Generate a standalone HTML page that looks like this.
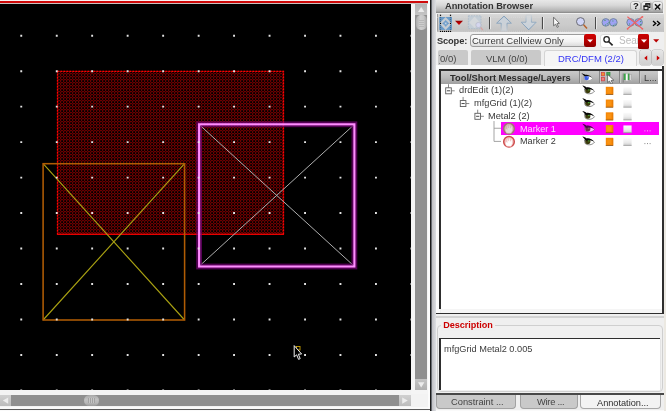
<!DOCTYPE html>
<html>
<head>
<meta charset="utf-8">
<title>Annotation Browser</title>
<style>
html,body{margin:0;padding:0;}
body{width:666px;height:411px;overflow:hidden;background:#efefef;position:relative;
 font-family:"Liberation Sans",sans-serif;font-size:9.3px;color:#2a2a2a;}
.a{position:absolute;}
.t{position:absolute;white-space:nowrap;line-height:12px;will-change:transform;}
.b{font-weight:bold;}
#panel{left:436px;top:0;width:228px;height:411px;background:#efefef;}
.row{position:absolute;left:0;height:12.75px;width:217px;}
.tb{top:1.8px;width:8.8px;height:8.6px;border-radius:2px;background:linear-gradient(#f2f2f2,#d2d2d2);box-shadow:0 0 0 0.6px #9a9a9a}
.sb{top:50.2px;width:11.2px;height:15px;border-radius:2.5px;background:linear-gradient(#e6e6e6,#cfcfcf);box-shadow:0 0 0 0.6px #b4b4b4}
.hs{top:71.4px;width:1px;height:12px;background:#868686;box-shadow:1px 0 0 #c8c8c8}
</style>
</head>
<body>
<!-- ===== layout canvas ===== -->
<div class="a" style="left:0;top:0;width:430px;height:1px;background:#fbf3f3"></div>
<div class="a" style="left:0;top:1px;width:428px;height:2px;background:#cf0a0a"></div>
<div class="a" style="left:0;top:3px;width:428px;height:1px;background:#c9c2c2"></div>
<svg class="a" style="left:0;top:4px" width="411" height="386" viewBox="0 4 411 386">
 <defs>
  <pattern id="stip" x="57" y="70" width="3" height="3" patternUnits="userSpaceOnUse">
   <rect width="3" height="3" fill="#000"/>
   <rect x="0" y="0" width="1" height="1" fill="#2a0000"/>
   <rect x="1" y="0" width="2" height="1" fill="#6a0000"/>
   <rect x="0" y="1" width="1" height="2" fill="#6a0000"/>
   <rect x="1" y="1" width="1" height="1" fill="#2c0000"/>
   <rect x="2" y="1" width="1" height="1" fill="#160000"/>
   <rect x="1" y="2" width="1" height="1" fill="#160000"/>
  </pattern>
  
 </defs>
 <rect x="0" y="4" width="411" height="386" fill="#000"/>
 <!-- Metal2 shape -->
 <rect x="57" y="71" width="226.5" height="163.5" fill="url(#stip)"/>
 <rect x="57.5" y="71.4" width="226" height="163" fill="none" stroke="#8a0000" stroke-width="1.2"/>
 <rect x="57.5" y="71.4" width="226" height="163" fill="none" stroke="#ff0000" stroke-width="1.2" stroke-dasharray="1.5 1.5"/>
 <path d="M57 234.3 H284" stroke="#e80000" stroke-width="1.2"/>
 <!-- marker 2 (orange) -->
 <path d="M43.1 163.7 L184.6 320 M184.6 163.7 L43.1 320" stroke="#a8a012" stroke-width="1.15" fill="none"/>
 <rect x="43.1" y="163.7" width="141.5" height="156.3" fill="none" stroke="#b05c04" stroke-width="1.55"/>
 <!-- marker 1 (magenta highlight) -->
 <path d="M199 124.4 L354.4 266.4 M354.4 124.4 L199 266.4" stroke="#adadad" stroke-width="1" fill="none"/>
 <rect x="199.1" y="124.3" width="155.3" height="142.2" fill="none" stroke="#7a007a" stroke-width="5.8" opacity="0.68"/>
 <rect x="199.1" y="124.3" width="155.3" height="142.2" fill="none" stroke="#ff8cff" stroke-width="2.1"/>
 <!-- grid -->
 <path fill="#e2e2e2" d="M20.3 34.8h1.9v1.9h-1.9zM55.8 34.8h1.9v1.9h-1.9zM91.2 34.8h1.9v1.9h-1.9zM126.7 34.8h1.9v1.9h-1.9zM162.2 34.8h1.9v1.9h-1.9zM197.7 34.8h1.9v1.9h-1.9zM233.1 34.8h1.9v1.9h-1.9zM268.6 34.8h1.9v1.9h-1.9zM304.1 34.8h1.9v1.9h-1.9zM339.5 34.8h1.9v1.9h-1.9zM375.0 34.8h1.9v1.9h-1.9zM410.5 34.8h1.9v1.9h-1.9zM20.3 70.3h1.9v1.9h-1.9zM55.8 70.3h1.9v1.9h-1.9zM91.2 70.3h1.9v1.9h-1.9zM126.7 70.3h1.9v1.9h-1.9zM162.2 70.3h1.9v1.9h-1.9zM197.7 70.3h1.9v1.9h-1.9zM233.1 70.3h1.9v1.9h-1.9zM268.6 70.3h1.9v1.9h-1.9zM304.1 70.3h1.9v1.9h-1.9zM339.5 70.3h1.9v1.9h-1.9zM375.0 70.3h1.9v1.9h-1.9zM410.5 70.3h1.9v1.9h-1.9zM20.3 105.7h1.9v1.9h-1.9zM55.8 105.7h1.9v1.9h-1.9zM91.2 105.7h1.9v1.9h-1.9zM126.7 105.7h1.9v1.9h-1.9zM162.2 105.7h1.9v1.9h-1.9zM197.7 105.7h1.9v1.9h-1.9zM233.1 105.7h1.9v1.9h-1.9zM268.6 105.7h1.9v1.9h-1.9zM304.1 105.7h1.9v1.9h-1.9zM339.5 105.7h1.9v1.9h-1.9zM375.0 105.7h1.9v1.9h-1.9zM410.5 105.7h1.9v1.9h-1.9zM20.3 141.2h1.9v1.9h-1.9zM55.8 141.2h1.9v1.9h-1.9zM91.2 141.2h1.9v1.9h-1.9zM126.7 141.2h1.9v1.9h-1.9zM162.2 141.2h1.9v1.9h-1.9zM197.7 141.2h1.9v1.9h-1.9zM233.1 141.2h1.9v1.9h-1.9zM268.6 141.2h1.9v1.9h-1.9zM304.1 141.2h1.9v1.9h-1.9zM339.5 141.2h1.9v1.9h-1.9zM375.0 141.2h1.9v1.9h-1.9zM410.5 141.2h1.9v1.9h-1.9zM20.3 176.7h1.9v1.9h-1.9zM55.8 176.7h1.9v1.9h-1.9zM91.2 176.7h1.9v1.9h-1.9zM126.7 176.7h1.9v1.9h-1.9zM162.2 176.7h1.9v1.9h-1.9zM197.7 176.7h1.9v1.9h-1.9zM233.1 176.7h1.9v1.9h-1.9zM268.6 176.7h1.9v1.9h-1.9zM304.1 176.7h1.9v1.9h-1.9zM339.5 176.7h1.9v1.9h-1.9zM375.0 176.7h1.9v1.9h-1.9zM410.5 176.7h1.9v1.9h-1.9zM20.3 212.1h1.9v1.9h-1.9zM55.8 212.1h1.9v1.9h-1.9zM91.2 212.1h1.9v1.9h-1.9zM126.7 212.1h1.9v1.9h-1.9zM162.2 212.1h1.9v1.9h-1.9zM197.7 212.1h1.9v1.9h-1.9zM233.1 212.1h1.9v1.9h-1.9zM268.6 212.1h1.9v1.9h-1.9zM304.1 212.1h1.9v1.9h-1.9zM339.5 212.1h1.9v1.9h-1.9zM375.0 212.1h1.9v1.9h-1.9zM410.5 212.1h1.9v1.9h-1.9zM20.3 247.6h1.9v1.9h-1.9zM55.8 247.6h1.9v1.9h-1.9zM91.2 247.6h1.9v1.9h-1.9zM126.7 247.6h1.9v1.9h-1.9zM162.2 247.6h1.9v1.9h-1.9zM197.7 247.6h1.9v1.9h-1.9zM233.1 247.6h1.9v1.9h-1.9zM268.6 247.6h1.9v1.9h-1.9zM304.1 247.6h1.9v1.9h-1.9zM339.5 247.6h1.9v1.9h-1.9zM375.0 247.6h1.9v1.9h-1.9zM410.5 247.6h1.9v1.9h-1.9zM20.3 283.1h1.9v1.9h-1.9zM55.8 283.1h1.9v1.9h-1.9zM91.2 283.1h1.9v1.9h-1.9zM126.7 283.1h1.9v1.9h-1.9zM162.2 283.1h1.9v1.9h-1.9zM197.7 283.1h1.9v1.9h-1.9zM233.1 283.1h1.9v1.9h-1.9zM268.6 283.1h1.9v1.9h-1.9zM304.1 283.1h1.9v1.9h-1.9zM339.5 283.1h1.9v1.9h-1.9zM375.0 283.1h1.9v1.9h-1.9zM410.5 283.1h1.9v1.9h-1.9zM20.3 318.6h1.9v1.9h-1.9zM55.8 318.6h1.9v1.9h-1.9zM91.2 318.6h1.9v1.9h-1.9zM126.7 318.6h1.9v1.9h-1.9zM162.2 318.6h1.9v1.9h-1.9zM197.7 318.6h1.9v1.9h-1.9zM233.1 318.6h1.9v1.9h-1.9zM268.6 318.6h1.9v1.9h-1.9zM304.1 318.6h1.9v1.9h-1.9zM339.5 318.6h1.9v1.9h-1.9zM375.0 318.6h1.9v1.9h-1.9zM410.5 318.6h1.9v1.9h-1.9zM20.3 354.0h1.9v1.9h-1.9zM55.8 354.0h1.9v1.9h-1.9zM91.2 354.0h1.9v1.9h-1.9zM126.7 354.0h1.9v1.9h-1.9zM162.2 354.0h1.9v1.9h-1.9zM197.7 354.0h1.9v1.9h-1.9zM233.1 354.0h1.9v1.9h-1.9zM268.6 354.0h1.9v1.9h-1.9zM304.1 354.0h1.9v1.9h-1.9zM339.5 354.0h1.9v1.9h-1.9zM375.0 354.0h1.9v1.9h-1.9zM410.5 354.0h1.9v1.9h-1.9zM20.3 389.5h1.9v1.9h-1.9zM55.8 389.5h1.9v1.9h-1.9zM91.2 389.5h1.9v1.9h-1.9zM126.7 389.5h1.9v1.9h-1.9zM162.2 389.5h1.9v1.9h-1.9zM197.7 389.5h1.9v1.9h-1.9zM233.1 389.5h1.9v1.9h-1.9zM268.6 389.5h1.9v1.9h-1.9zM304.1 389.5h1.9v1.9h-1.9zM339.5 389.5h1.9v1.9h-1.9zM375.0 389.5h1.9v1.9h-1.9zM410.5 389.5h1.9v1.9h-1.9z"/>
 <!-- cursor -->
 <rect x="296.5" y="346.5" width="3.5" height="3.5" fill="none" stroke="#c8a000" stroke-width="0.9"/>
 <path d="M294.2 345.6 L294.2 357 L296.6 354.8 L298.6 359.4 L300.2 358.6 L298.3 354.2 L301.6 354 Z" fill="#000" stroke="#f0f0f0" stroke-width="1"/>
</svg>
<!-- scrollbars -->
<div class="a" style="left:0;top:390px;width:430px;height:17px;background:#f3f3f3"></div>
<div class="a" style="left:411px;top:4px;width:19px;height:390px;background:#f5f5f5"></div>
<div class="a" style="left:415px;top:4px;width:12.4px;height:386px;background:#909090"></div>
<div class="a" style="left:415px;top:4px;width:12.4px;height:11px;background:linear-gradient(#b4b4b4,#c4c4c4)"></div>
<svg class="a" style="left:415px;top:4px" width="13" height="11"><path d="M6.2 3 L9.4 8 L3 8 Z" fill="#ececec"/></svg>
<div class="a" style="left:415.6px;top:15.3px;width:11.2px;height:15px;border-radius:5px;background:linear-gradient(90deg,#aaa,#cfcfcf 40%,#c8c8c8 70%,#a4a4a4);"></div>
<div class="a" style="left:418.5px;top:19.5px;width:5.5px;height:7px;background:repeating-linear-gradient(#b8b8b8 0,#b8b8b8 1px,#cdcdcd 1px,#cdcdcd 2px)"></div>
<div class="a" style="left:415px;top:379.3px;width:12.4px;height:10.7px;background:linear-gradient(#c4c4c4,#b0b0b0)"></div>
<svg class="a" style="left:415px;top:379px" width="13" height="11"><path d="M3 3.2 L9.4 3.2 L6.2 8.4 Z" fill="#ececec"/></svg>

<div class="a" style="left:0;top:394.8px;width:411px;height:11.5px;background:#8f8f8f"></div>
<div class="a" style="left:0;top:394.8px;width:11px;height:11.5px;background:linear-gradient(#d0d0d0,#bcbcbc)"></div>
<svg class="a" style="left:0;top:395px" width="11" height="11"><path d="M2.8 5.6 L8.2 2.4 L8.2 8.8 Z" fill="#ececec"/></svg>
<div class="a" style="left:399px;top:394.8px;width:11.6px;height:11.5px;background:linear-gradient(#d0d0d0,#bcbcbc)"></div>
<svg class="a" style="left:399px;top:395px" width="12" height="11"><path d="M8.8 5.6 L3.2 2.4 L3.2 8.8 Z" fill="#ececec"/></svg>
<div class="a" style="left:83.6px;top:395px;width:15.6px;height:11px;border-radius:5.5px;background:linear-gradient(#a8a8a8,#c0c0c0 40%,#b8b8b8 70%,#9c9c9c);"></div>
<div class="a" style="left:87.6px;top:398px;width:7.6px;height:5px;background:repeating-linear-gradient(90deg,#a2a2a2 0,#a2a2a2 1px,#c6c6c6 1px,#c6c6c6 2px)"></div>
<div class="a" style="left:0;top:407px;width:430px;height:2px;background:#fafafa"></div>
<div class="a" style="left:0;top:408.8px;width:430px;height:1px;background:#5a5a5a"></div>
<div class="a" style="left:0;top:410px;width:430px;height:1px;background:#fafafa"></div>
<div class="a" style="left:427.6px;top:0;width:2.6px;height:409px;background:#fcfcfc"></div>
<!-- splitter -->
<div class="a" style="left:430px;top:0;width:1px;height:411px;background:#1c1c1c"></div>
<div class="a" style="left:431px;top:0;width:1px;height:411px;background:#686c72"></div>
<div class="a" style="left:432px;top:0;width:4px;height:411px;background:linear-gradient(90deg,#c0c0c4,#cfd0d4 50%,#dddfe3)"></div>

<!-- ===== Annotation Browser panel ===== -->
<div id="panel" class="a">
 <!-- title bar -->
 <div class="a" style="left:0;top:0;width:227.3px;height:13.4px;background:linear-gradient(#e8e8e8,#d8d8d8 40%,#b6b6b6 80%,#a0a0a0 92%,#808080)"></div>
 <div class="t b" style="left:9.2px;top:0.3px;font-size:9.25px;color:#333;letter-spacing:-0.02px">Annotation Browser</div>
 <div class="a tb" style="left:195px"></div><div class="a tb" style="left:206.2px"></div><div class="a tb" style="left:217.3px"></div>
 <div class="t b" style="left:197px;top:0.2px;font-size:9.5px;color:#111">?</div>
 <svg class="a" style="left:206px;top:1.5px" width="10" height="10"><path d="M3.8 3.4 V1.7 H7.9 V5.4 H6.4" fill="none" stroke="#111" stroke-width="1.05"/><path d="M3.4 2 H8.2" stroke="#111" stroke-width="1.3"/><rect x="2" y="4" width="4" height="3.7" fill="#e4e4e4" stroke="#111" stroke-width="1.05"/><path d="M1.6 4.3 H6.4" stroke="#111" stroke-width="1.3"/></svg>
 <svg class="a" style="left:217.3px;top:1.5px" width="10" height="10"><path d="M2 2.2 L7.2 7.6 M7.2 2.2 L2 7.6" stroke="#111" stroke-width="1.5"/></svg>
 <!-- toolbar -->
 <div class="a" style="left:0;top:13.8px;width:1px;height:18.6px;background:#f6f6f6"></div>
 <div class="a" style="left:1px;top:13.8px;width:227px;height:18.6px;background:linear-gradient(#dadada,#cfcfcf 25%,#cbcbcb 60%,#c1c1c1);box-shadow:inset 1px 0 0 #9c9c9c"></div>
 <svg class="a" style="left:0;top:13px" width="228" height="20" viewBox="436 13 228 20">
  <defs>
  <linearGradient id="ups" gradientUnits="userSpaceOnUse" x1="0" y1="16" x2="0" y2="31"><stop offset="0" stop-color="#7496b6"/><stop offset="0.5" stop-color="#86a2bc"/><stop offset="1" stop-color="#c6ccd2"/></linearGradient>
  <linearGradient id="upf" gradientUnits="userSpaceOnUse" x1="0" y1="16" x2="0" y2="31"><stop offset="0" stop-color="#c8d2dc"/><stop offset="1" stop-color="#cfd1d4"/></linearGradient>
  <linearGradient id="dns" gradientUnits="userSpaceOnUse" x1="0" y1="15" x2="0" y2="30"><stop offset="0" stop-color="#cfd3d7"/><stop offset="0.5" stop-color="#8ca6be"/><stop offset="1" stop-color="#7496b6"/></linearGradient>
  <linearGradient id="dnf" gradientUnits="userSpaceOnUse" x1="0" y1="15" x2="0" y2="30"><stop offset="0" stop-color="#d6d8da"/><stop offset="1" stop-color="#c6d0da"/></linearGradient>
  <linearGradient id="rtri" x1="0" y1="0" x2="0" y2="1"><stop offset="0" stop-color="#8e0000"/><stop offset="1" stop-color="#e40000"/></linearGradient></defs>
  <path d="M437 17.4 H663 M437 31.3 H663" stroke="#dedede" stroke-width="0.9" stroke-dasharray="1 1.05" opacity="0.6"/>
  <!-- fit icon -->
  <rect x="439.2" y="17" width="12.8" height="12.9" fill="#6a9bc9"/>
  <path d="M445.6 17 L452 23.4 L445.6 29.9 L439.2 23.4 Z" fill="#c6ccd3"/>
  <circle cx="445.7" cy="23.4" r="2.1" fill="#86aed4" stroke="#6f9dca" stroke-width="0.7"/>
  <path d="M445.7 20.2 V26.6 M442.5 23.4 H448.9" stroke="#6f9dca" stroke-width="1.2"/>
  <circle cx="445.7" cy="23.4" r="0.9" fill="#c4d4e4"/>
  <g fill="#000">
   <rect x="439.9" y="14.7" width="1.2" height="1.2"/><rect x="449.9" y="14.7" width="1.2" height="1.2"/>
   <rect x="439.9" y="22.8" width="1.2" height="1.2"/><rect x="449.9" y="22.8" width="1.2" height="1.2"/>
   <rect x="439.9" y="30.8" width="1.2" height="1.2"/><rect x="441.9" y="30.8" width="1.2" height="1.2"/><rect x="443.9" y="30.8" width="1.2" height="1.2"/><rect x="445.9" y="30.8" width="1.2" height="1.2"/><rect x="447.9" y="30.8" width="1.2" height="1.2"/><rect x="449.9" y="30.8" width="1.2" height="1.2"/>
  </g>
  <g fill="#20303c" opacity="0.45">
   <rect x="439.9" y="16.8" width="1.2" height="1.2"/><rect x="439.9" y="18.8" width="1.2" height="1.2"/><rect x="439.9" y="20.8" width="1.2" height="1.2"/><rect x="439.9" y="24.8" width="1.2" height="1.2"/><rect x="439.9" y="26.8" width="1.2" height="1.2"/><rect x="439.9" y="28.8" width="1.2" height="1.2"/>
   <rect x="449.9" y="16.8" width="1.2" height="1.2"/><rect x="449.9" y="18.8" width="1.2" height="1.2"/><rect x="449.9" y="20.8" width="1.2" height="1.2"/><rect x="449.9" y="24.8" width="1.2" height="1.2"/><rect x="449.9" y="26.8" width="1.2" height="1.2"/><rect x="449.9" y="28.8" width="1.2" height="1.2"/>
  </g>
  <path d="M455 20.8 H463 L459 25.1 Z" fill="url(#rtri)"/>
  <!-- zoom-to icon (disabled) -->
  <rect x="468.4" y="15.8" width="12.6" height="12.8" fill="#c3cdd6" stroke="#a9b9c8" stroke-width="0.8" stroke-dasharray="1.6 1"/>
  <path d="M474.6 16.6 L480 22.4 L474.6 28 L469.2 22.4 Z" fill="#d4d8dc"/>
  <circle cx="478.4" cy="25" r="2.6" fill="#d4d6ee" stroke="#b4b8c8" stroke-width="0.7"/>
  <path d="M480.6 27.4 L482.8 30.2" stroke="#d8a0a0" stroke-width="1.2"/>
  <rect x="489" y="17" width="1.1" height="12.2" fill="#4a4a4a"/><rect x="490.1" y="17" width="0.9" height="12.2" fill="#ececec"/>
  <!-- up / down arrows (disabled) -->
  <path d="M504 16.2 L511.4 23.2 H507 V31 H501.2 V23.2 H496.6 Z" fill="url(#upf)" stroke="url(#ups)" stroke-width="0.9"/>
  <path d="M526 15 H531.4 V22.2 H536.2 L528.7 29.8 L521.2 22.2 H526 Z" fill="url(#dnf)" stroke="url(#dns)" stroke-width="0.9"/>
  <rect x="541.9" y="17" width="1.1" height="12.2" fill="#4a4a4a"/><rect x="543.0" y="17" width="0.9" height="12.2" fill="#ececec"/>
  <!-- pointer -->
  <path d="M553.6 17.2 V25.8 L555.6 24.2 L557.2 27.4 L558.4 26.8 L556.9 23.7 L559.4 23.4 Z" fill="#fafafa" stroke="#555" stroke-width="0.8"/>
  <!-- magnifier -->
  <circle cx="580.5" cy="21.6" r="4" fill="#cfd4f6" stroke="#6a6a72" stroke-width="1"/>
  <path d="M583.6 24.8 L587 28.4" stroke="#b8602a" stroke-width="1.5"/>
  <rect x="595" y="17" width="1.1" height="12.2" fill="#4a4a4a"/><rect x="596.1" y="17" width="0.9" height="12.2" fill="#ececec"/>
  <!-- binoculars -->
  <circle cx="605.8" cy="22.4" r="3.8" fill="#9ea2f4" stroke="#6d8496" stroke-width="0.9"/>
  <circle cx="613.4" cy="22.4" r="3.8" fill="#9ea2f4" stroke="#6d8496" stroke-width="0.9"/>
  <path d="M604.4 20.4 h1.2 M606.8 23.8 h1 M612.4 21 h1 M614.6 24.2 h1 M609 22 v1.2 M605 25 h1 M613 25.4 h1" stroke="#3c9a54" stroke-width="0.9"/>
  <!-- binoculars crossed -->
  <circle cx="630.6" cy="22.4" r="3.8" fill="#9ea2f4" stroke="#6d8496" stroke-width="0.9"/>
  <circle cx="638.6" cy="22.4" r="3.8" fill="#9ea2f4" stroke="#6d8496" stroke-width="0.9"/>
  <path d="M629 24 h1 M640.6 21 v1.2 M640.6 24 v1" stroke="#3c9a54" stroke-width="0.9"/>
  <path d="M627.4 16.8 L642.4 28.8 M642.4 16.8 L627.4 28.8" stroke="#ee6262" stroke-width="1.1"/>
  <circle cx="627.6" cy="28.8" r="0.9" fill="#ee6262"/><circle cx="642.4" cy="16.8" r="0.9" fill="#ee6262"/><circle cx="642.4" cy="28.8" r="0.9" fill="#ee6262"/>
  <path d="M653 21 L655.8 23.4 L653 25.8 M657 21 L659.8 23.4 L657 25.8" fill="none" stroke="#000" stroke-width="1.3"/>
 </svg>
 <!-- scope row -->
 <div class="t b" style="left:1.1px;top:35.2px;font-size:9.3px;color:#333;letter-spacing:-0.15px">Scope:</div>
 <div class="a" style="left:33.8px;top:34px;width:126.6px;height:13.4px;box-sizing:border-box;border:1px solid #9c9c9c;border-radius:3px;background:linear-gradient(#fdfdfd,#f2f2f2 60%,#dcdcdc)"></div>
 <div class="t" style="left:35.6px;top:35.2px;font-size:9.5px;color:#3a3a3a">Current Cellview Only</div>
 <div class="a" style="left:148px;top:34.3px;width:12.2px;height:12.9px;border-radius:2.5px;background:linear-gradient(#d40000,#b80000 50%,#8e0000)"></div>
 <svg class="a" style="left:148px;top:34px" width="13" height="14"><path d="M3.2 5.4 H9 L6.1 8.6 Z" fill="#fff"/></svg>
 <div class="a" style="left:163.7px;top:33.8px;width:49.4px;height:14.6px;box-sizing:border-box;border:1px solid #dcdcdc;border-radius:3px;background:#fff"></div>
 <svg class="a" style="left:165px;top:34px" width="14" height="14"><circle cx="5.6" cy="5.4" r="2.7" fill="none" stroke="#222" stroke-width="1.3"/><path d="M7.6 7.5 L11.6 11.4" stroke="#222" stroke-width="1.7"/></svg>
 <div class="t" style="left:182.6px;top:35.4px;font-size:10px;color:#bcbcbc;width:20px;overflow:hidden">Search</div>
 <div class="a" style="left:201.6px;top:34.2px;width:11.5px;height:14.5px;border-radius:1.5px;background:linear-gradient(#cc0000,#b40000 50%,#930000)"></div>
 <svg class="a" style="left:201.6px;top:34px" width="12" height="14"><path d="M3 5.6 H9 L6 8.8 Z" fill="#fff"/></svg>
 <svg class="a" style="left:216px;top:38px" width="10" height="6"><path d="M1.2 1.2 H7.2 L4.2 4.6 Z" fill="#b80000"/></svg>
 <!-- tabs -->
 <div class="a" style="left:0;top:65px;width:228px;height:4.6px;background:#f9f9f9"></div>
 <div class="a" style="left:2.4px;top:50px;width:29.4px;height:15px;background:#c9c9c9;border-radius:2px 2px 0 0"></div>
 <div class="t" style="left:3px;top:52.8px;font-size:9.5px;color:#444;width:28px;overflow:hidden"><span style="margin-left:-2.2px">(0/0)</span></div>
 <div class="a" style="left:35px;top:50px;width:69.6px;height:15px;background:#c9c9c9;border-radius:2px 2px 0 0"></div>
 <div class="t" style="left:50px;top:52.8px;font-size:9.5px;color:#444">VLM (0/0)</div>
 <div class="a" style="left:108.4px;top:49.6px;width:92.4px;height:16.6px;box-sizing:border-box;background:#f5f5f5;border:1px solid #d4d4d4;border-bottom:none;border-radius:3px 3px 0 0"></div>
 <div class="t" style="left:122px;top:52.8px;font-size:9.5px;color:#3434f4">DRC/DFM (2/2)</div>
 <div class="a sb" style="left:204px"></div><div class="a sb" style="left:215.8px"></div>
 <svg class="a" style="left:204px;top:50px" width="24" height="16"><path d="M7.2 5.6 V10.6 L4.2 8.1 Z M16.8 5.6 V10.6 L19.8 8.1 Z" fill="#c80000"/></svg>
 <!-- tree frame -->
 <div class="a" style="left:0;top:66px;width:4px;height:246.6px;background:#fbfbfb"></div>
 <div class="a" style="left:5px;top:70.8px;width:221.2px;height:238.4px;background:#fff"></div>
 <div class="a" style="left:5px;top:309.2px;width:222px;height:3.4px;background:#f5f5f5"></div>
 <div class="a" style="left:3.4px;top:69.3px;width:224.2px;height:1.5px;background:#2e2e2e"></div>
 <div class="a" style="left:3.4px;top:69.3px;width:1.6px;height:239.4px;background:#2e2e2e"></div>
 <div class="a" style="left:226.2px;top:66px;width:1.5px;height:248px;background:#2e2e2e"></div>
 <div class="a" style="left:0;top:312.6px;width:227.7px;height:1.5px;background:#2e2e2e"></div>
 <div class="a" style="left:0;top:316.2px;width:228px;height:2px;background:#d2d2d2"></div>
 <!-- header -->
 <div class="a" style="left:5px;top:70.8px;width:217.2px;height:13.1px;background:linear-gradient(#c9c9c9,#b9b9b9 50%,#9f9f9f)"></div>
 <div class="a hs" style="left:143px"></div><div class="a hs" style="left:163px"></div><div class="a hs" style="left:183.2px"></div><div class="a hs" style="left:203px"></div>
 <div class="t b" style="left:14px;top:71.9px;font-size:9.35px;color:#2c2c2c">Tool/Short Message/Layers</div>
 <div class="t" style="left:208.4px;top:71.9px;font-size:9.3px;color:#3a3a3a">L...</div>
<svg class="a" style="left:140px;top:70px" width="88" height="14" viewBox="576 70 88 14">
<g transform="translate(581.2,72.8)">
   <path d="M2.6 3.2 C5 1.6 9 2.6 11.4 5.6 C9.6 8.2 5.4 8.6 3 6.6 Z" fill="#fff" stroke="#8a8a8a" stroke-width="0.6"/>
   <ellipse cx="5.4" cy="4.9" rx="2.3" ry="2.5" fill="#3c5ce4"/>
   <circle cx="6.3" cy="4.1" r="0.7" fill="#8aa0ff"/>
   <path d="M0.2 0.4 C1.6 0.6 3 1.4 4 2 C6 1.6 8.6 2.4 10.6 4.6 C8.2 3.4 5.6 3 3.4 3.6 C2.4 2.4 1.2 1.2 0.2 0.4 Z" fill="#0a0a0a"/>
  </g><rect x="601.4" y="72.6" width="3.2" height="3.2" fill="#f09030" stroke="#d04040" stroke-width="0.7"/>
<rect x="606.8" y="72.4" width="3.2" height="3.2" fill="#48b058" stroke="#2c8c3c" stroke-width="0.7"/>
<rect x="601.4" y="77.6" width="3.2" height="3.2" fill="#f08080" stroke="#d04040" stroke-width="0.7"/>
<path d="M607.6 74.4 V82.6 L609.5 81 L611 84 L612.5 83.3 L611.1 80.5 L613.8 80.2 Z" fill="#fff" stroke="#4a4a4a" stroke-width="0.7"/>
<path d="M623.2 73.4 V82.6" stroke="#7a7a7a" stroke-width="0.9"/>
<rect x="623.8" y="73.6" width="2" height="6.4" fill="#3aa648"/><rect x="625.8" y="74.2" width="2" height="6.4" fill="#fafafa"/><rect x="627.8" y="73.6" width="1.8" height="6.4" fill="#3aa648"/><rect x="629.6" y="74.2" width="2" height="6.4" fill="#d8d8d8" stroke="#8a8a8a" stroke-width="0.4"/>
</svg>
<!--ROWS-START-->
<div class="a" style="left:65px;top:122.20px;width:157.6px;height:13px;background:#ff00ff"></div>
<div class="t" style="left:22.5px;top:84px;font-size:9.25px;color:#383838">drdEdit (1)(2)</div>
<div class="t" style="left:37.8px;top:97px;font-size:9.25px;color:#383838">mfgGrid (1)(2)</div>
<div class="t" style="left:52.4px;top:110px;font-size:9.25px;color:#383838">Metal2 (2)</div>
<div class="t" style="left:83.8px;top:123px;font-size:9.1px;color:#ffdcff">Marker 1</div>
<div class="t" style="left:83.8px;top:135px;font-size:9.1px;color:#383838">Marker 2</div>
<svg width="0" height="0" class="a"><defs><linearGradient id="gsq" x1="0" y1="0" x2="0" y2="1"><stop offset="0" stop-color="#fbfbfb"/><stop offset="0.55" stop-color="#ececec"/><stop offset="1" stop-color="#cccccc"/></linearGradient></defs></svg>
<svg class="a" style="left:0;top:83px" width="228" height="70" viewBox="436 83 228 70">
<path d="M448.5 84.2 V87.8 M451.3 90.8 H454.7" stroke="#7a7a7a" stroke-width="0.9" fill="none"/><rect x="445.7" y="87.8" width="5.6" height="6" fill="#fff" stroke="#5c5c5c" stroke-width="0.9"/><path d="M446.9 90.8 H450.09999999999997" stroke="#333" stroke-width="0.9"/>
<path d="M463.1 96.95 V100.55 M465.90000000000003 103.55 H469.3" stroke="#7a7a7a" stroke-width="0.9" fill="none"/><rect x="460.3" y="100.55" width="5.6" height="6" fill="#fff" stroke="#5c5c5c" stroke-width="0.9"/><path d="M461.5 103.55 H464.7" stroke="#333" stroke-width="0.9"/>
<path d="M477.7 109.7 V113.3 M480.5 116.3 H483.9" stroke="#7a7a7a" stroke-width="0.9" fill="none"/><rect x="474.9" y="113.3" width="5.6" height="6" fill="#fff" stroke="#5c5c5c" stroke-width="0.9"/><path d="M476.09999999999997 116.3 H479.29999999999995" stroke="#333" stroke-width="0.9"/>
<path d="M494 121.05 V141.4 M494 128.25 H501 M494 141.4 H501" stroke="#9a9a9a" stroke-width="0.9" fill="none"/>
<circle cx="509" cy="128.65" r="5.3" fill="#d6b4b4" stroke="#a27474" stroke-width="1.5"/>
  <path d="M506.6 133.25 C505.2 131.05 505 128.85 506 128.25 L507.1 129.45000000000002 L507.2 125.85000000000001 L508.3 125.55000000000001 L508.6 128.05 L509.2 125.05000000000001 L510.3 125.25 L510.4 128.25 L511.4 126.05000000000001 L512.3 126.65 L512.4 130.45000000000002 L511.2 133.35 Z" fill="#e2dcdc" stroke="#c8a8a8" stroke-width="0.4"/>
<circle cx="509" cy="141.7" r="5.3" fill="#f3c6c6" stroke="#cf4c4c" stroke-width="1.5"/>
  <path d="M506.6 146.29999999999998 C505.2 144.1 505 141.89999999999998 506 141.29999999999998 L507.1 142.5 L507.2 138.89999999999998 L508.3 138.6 L508.6 141.1 L509.2 138.1 L510.3 138.29999999999998 L510.4 141.29999999999998 L511.4 139.1 L512.3 139.7 L512.4 143.5 L511.2 146.39999999999998 Z" fill="#ffffff" stroke="#eeb0b0" stroke-width="0.4"/>
<g transform="translate(582.3,85.6)">
   <path d="M2.2 3.4 C5 1.4 9.6 2.6 12.2 5.6 C10 8.6 5.4 9 2.8 6.8 Z" fill="#fff" stroke="#4c4c4c" stroke-width="0.65"/>
   <ellipse cx="5.5" cy="5" rx="2.6" ry="2.7" fill="#3c3c0c"/>
   <circle cx="6.6" cy="4.1" r="0.75" fill="#40c840"/>
   <path d="M0 0 C1.8 0.2 3.2 1 4.4 1.8 C6.6 1.4 9.4 2.4 11.6 5 C8.8 3.6 6 3.2 3.4 4.2 C2.4 2.6 1.2 1.2 0 0 Z" fill="#080808"/>
  </g>
<rect x="605.8" y="86.80" width="7.4" height="7.9" fill="#f68808"/><rect x="607.2" y="88.40" width="4" height="4.4" fill="#f99312"/><path d="M605.8 94.50 H613.2" stroke="#7a4a18" stroke-width="0.7"/><path d="M612.8 87.30 V94.20" stroke="#dc7400" stroke-width="0.7"/>
<rect x="623.4" y="87.20" width="8.2" height="7.4" fill="url(#gsq)"/><path d="M623.4 94.40 H631.6" stroke="#9a9a9a" stroke-width="0.8"/>
<g transform="translate(582.3,98.35)">
   <path d="M2.2 3.4 C5 1.4 9.6 2.6 12.2 5.6 C10 8.6 5.4 9 2.8 6.8 Z" fill="#fff" stroke="#4c4c4c" stroke-width="0.65"/>
   <ellipse cx="5.5" cy="5" rx="2.6" ry="2.7" fill="#3c3c0c"/>
   <circle cx="6.6" cy="4.1" r="0.75" fill="#40c840"/>
   <path d="M0 0 C1.8 0.2 3.2 1 4.4 1.8 C6.6 1.4 9.4 2.4 11.6 5 C8.8 3.6 6 3.2 3.4 4.2 C2.4 2.6 1.2 1.2 0 0 Z" fill="#080808"/>
  </g>
<rect x="605.8" y="99.55" width="7.4" height="7.9" fill="#f68808"/><rect x="607.2" y="101.15" width="4" height="4.4" fill="#f99312"/><path d="M605.8 107.25 H613.2" stroke="#7a4a18" stroke-width="0.7"/><path d="M612.8 100.05 V106.95" stroke="#dc7400" stroke-width="0.7"/>
<rect x="623.4" y="99.95" width="8.2" height="7.4" fill="url(#gsq)"/><path d="M623.4 107.15 H631.6" stroke="#9a9a9a" stroke-width="0.8"/>
<g transform="translate(582.3,111.1)">
   <path d="M2.2 3.4 C5 1.4 9.6 2.6 12.2 5.6 C10 8.6 5.4 9 2.8 6.8 Z" fill="#fff" stroke="#4c4c4c" stroke-width="0.65"/>
   <ellipse cx="5.5" cy="5" rx="2.6" ry="2.7" fill="#3c3c0c"/>
   <circle cx="6.6" cy="4.1" r="0.75" fill="#40c840"/>
   <path d="M0 0 C1.8 0.2 3.2 1 4.4 1.8 C6.6 1.4 9.4 2.4 11.6 5 C8.8 3.6 6 3.2 3.4 4.2 C2.4 2.6 1.2 1.2 0 0 Z" fill="#080808"/>
  </g>
<rect x="605.8" y="112.30" width="7.4" height="7.9" fill="#f68808"/><rect x="607.2" y="113.90" width="4" height="4.4" fill="#f99312"/><path d="M605.8 120.00 H613.2" stroke="#7a4a18" stroke-width="0.7"/><path d="M612.8 112.80 V119.70" stroke="#dc7400" stroke-width="0.7"/>
<rect x="623.4" y="112.70" width="8.2" height="7.4" fill="url(#gsq)"/><path d="M623.4 119.90 H631.6" stroke="#9a9a9a" stroke-width="0.8"/>
<g opacity="0.72" transform="translate(582.3,123.85)">
   <path d="M2.2 3.4 C5 1.4 9.6 2.6 12.2 5.6 C10 8.6 5.4 9 2.8 6.8 Z" fill="#fff" stroke="#4c4c4c" stroke-width="0.65"/>
   <ellipse cx="5.5" cy="5" rx="2.6" ry="2.7" fill="#3c3c0c"/>
   <circle cx="6.6" cy="4.1" r="0.75" fill="#40c840"/>
   <path d="M0 0 C1.8 0.2 3.2 1 4.4 1.8 C6.6 1.4 9.4 2.4 11.6 5 C8.8 3.6 6 3.2 3.4 4.2 C2.4 2.6 1.2 1.2 0 0 Z" fill="#080808"/>
  </g>
<rect x="605.8" y="125.05" width="7.4" height="7.9" fill="#f68808"/><rect x="607.2" y="126.65" width="4" height="4.4" fill="#f99312"/><path d="M605.8 132.75 H613.2" stroke="#7a4a18" stroke-width="0.7"/><path d="M612.8 125.55 V132.45" stroke="#dc7400" stroke-width="0.7"/>
<rect x="623.4" y="125.45" width="8.2" height="7.4" fill="url(#gsq)"/><path d="M623.4 132.65 H631.6" stroke="#9a9a9a" stroke-width="0.8"/>
<g transform="translate(582.3,136.60000000000002)">
   <path d="M2.2 3.4 C5 1.4 9.6 2.6 12.2 5.6 C10 8.6 5.4 9 2.8 6.8 Z" fill="#fff" stroke="#4c4c4c" stroke-width="0.65"/>
   <ellipse cx="5.5" cy="5" rx="2.6" ry="2.7" fill="#3c3c0c"/>
   <circle cx="6.6" cy="4.1" r="0.75" fill="#40c840"/>
   <path d="M0 0 C1.8 0.2 3.2 1 4.4 1.8 C6.6 1.4 9.4 2.4 11.6 5 C8.8 3.6 6 3.2 3.4 4.2 C2.4 2.6 1.2 1.2 0 0 Z" fill="#080808"/>
  </g>
<rect x="605.8" y="137.80" width="7.4" height="7.9" fill="#f68808"/><rect x="607.2" y="139.40" width="4" height="4.4" fill="#f99312"/><path d="M605.8 145.50 H613.2" stroke="#7a4a18" stroke-width="0.7"/><path d="M612.8 138.30 V145.20" stroke="#dc7400" stroke-width="0.7"/>
<rect x="623.4" y="138.20" width="8.2" height="7.4" fill="url(#gsq)"/><path d="M623.4 145.40 H631.6" stroke="#9a9a9a" stroke-width="0.8"/>
<path d="M644.4 130.85 h1 m1.6 0 h1 m1.6 0 h1" stroke="#f0c0f0" stroke-width="1"/>
<path d="M644.4 143.60 h1 m1.6 0 h1 m1.6 0 h1" stroke="#888" stroke-width="1"/>
</svg>
<!--ROWS-END-->
<!-- description -->
 <div class="a" style="left:1.2px;top:324.6px;width:226px;height:67px;box-sizing:border-box;border:1px solid #cfcfcf;border-radius:4px;background:#f0f0f0"></div>
 <div class="t b" style="left:5.1px;top:319.4px;font-size:9.1px;color:#cc0000;background:#efefef;padding:0 2.2px;letter-spacing:-0.03px">Description</div>
 <div class="a" style="left:5px;top:339.4px;width:219px;height:51px;background:#fff;box-shadow:1px 0 0 #e4e4e4"></div>
 <div class="a" style="left:3.4px;top:337.9px;width:220.6px;height:1.5px;background:#2e2e2e"></div>
 <div class="a" style="left:3.4px;top:337.9px;width:1.6px;height:52.4px;background:#2e2e2e"></div>
 <div class="t" style="left:7.8px;top:342.8px;font-size:9.2px;color:#3c3c3c">mfgGrid Metal2 0.005</div>
 <!-- bottom tabs -->
  <div class="a" style="left:0.4px;top:394.7px;width:79.6px;height:14.6px;box-sizing:border-box;background:#c9c9c9;border:1px solid #a2a2a2;border-top:none;border-radius:0 0 4px 4px"></div>
 <div class="t" style="left:15.2px;top:396px;font-size:9.3px;color:#444">Constraint ...</div>
 <div class="a" style="left:84.2px;top:394.7px;width:57.4px;height:14.6px;box-sizing:border-box;background:#c9c9c9;border:1px solid #a2a2a2;border-top:none;border-radius:0 0 4px 4px"></div>
 <div class="t" style="left:101px;top:396px;font-size:9.3px;color:#444;letter-spacing:-0.25px">Wire ...</div>
 <div class="a" style="left:144.4px;top:394px;width:80.6px;height:15.4px;box-sizing:border-box;background:#f3f3f3;border:1px solid #a8a8a8;border-top:none;border-radius:0 0 4px 4px"></div>
 <div class="t" style="left:160.6px;top:396.9px;font-size:9.2px;color:#2e2e2e">Annotation...</div>
 <div class="a" style="left:0;top:393.25px;width:227.6px;height:1.4px;background:#484848"></div>
 <div class="a" style="left:0;top:410px;width:228px;height:1px;background:#fafafa"></div>
</div>
<div class="a" style="left:664px;top:0;width:2px;height:411px;background:#ece9e2"></div>
</body>
</html>
